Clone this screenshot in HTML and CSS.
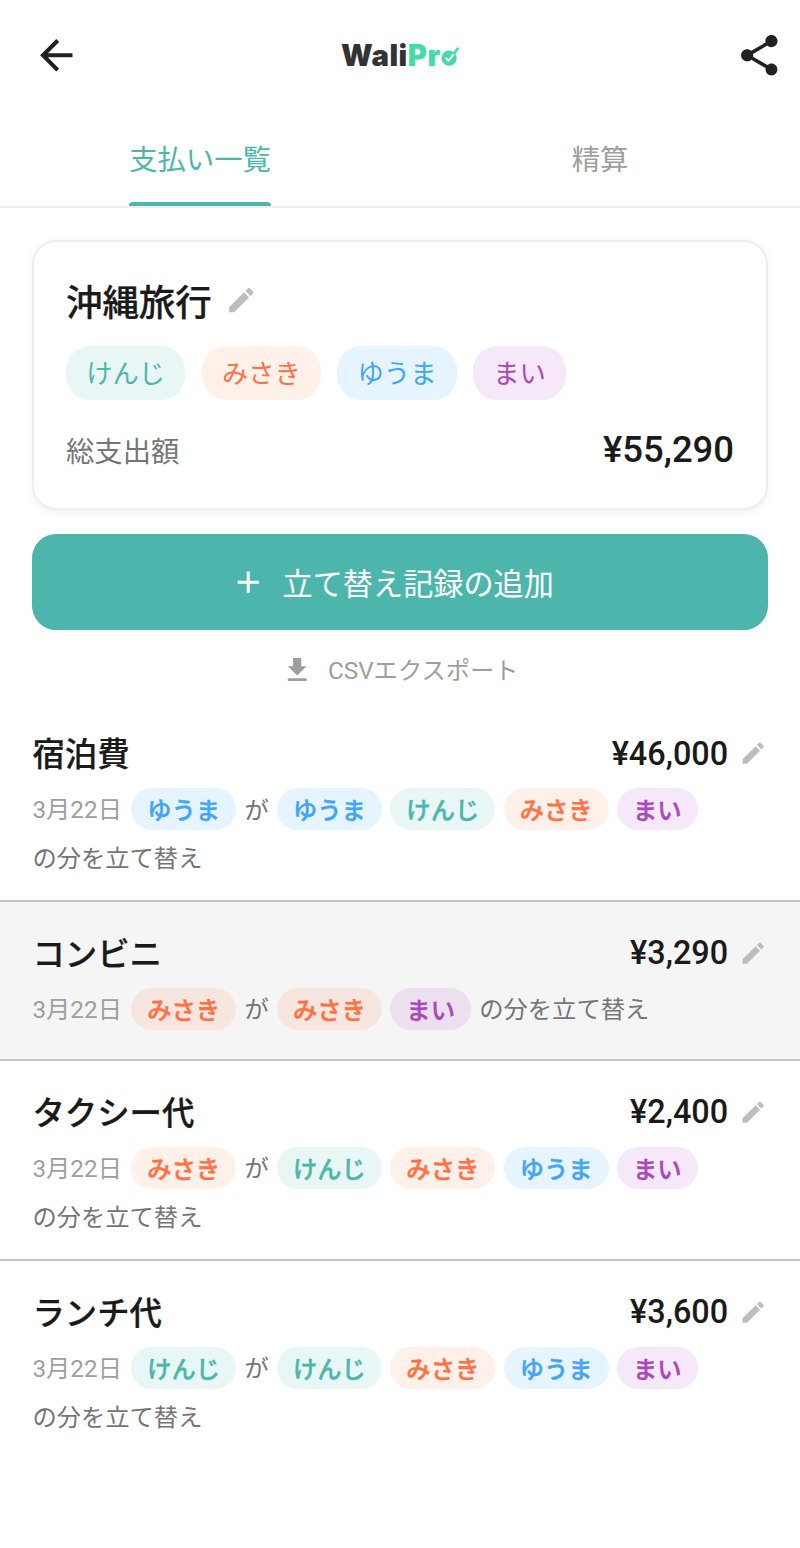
FILE: index.html
```html
<!DOCTYPE html>
<html lang="ja">
<head>
<meta charset="utf-8">
<title>WaliPro</title>
<link rel="stylesheet" href="styles.css">
</head>
<body>
<div class="app">
  <header class="topbar">
    <svg class="icon-nav" viewBox="0 0 24 24"><path d="M20 11H7.83l5.59-5.59L12 4l-8 8 8 8 1.41-1.41L7.83 13H20v-2z"/></svg>
    <div class="logo"><span class="logo-dark">Wali</span><span class="logo-green">Pr</span><svg class="logo-o" viewBox="0 0 18 22"><circle cx="8" cy="14" r="7.5" fill="#44dba9"/><path d="M4.4 13.6l3 3L13 9.5" fill="none" stroke="#fff" stroke-width="2"/><path d="M12.5 10.2L17 3.6" fill="none" stroke="#44dba9" stroke-width="2.6"/></svg></div>
    <svg class="icon-nav icon-share" viewBox="0 0 24 24"><path d="M18 16.08c-.76 0-1.44.3-1.96.77L8.91 12.7c.05-.23.09-.46.09-.7s-.04-.47-.09-.7l7.05-4.11c.54.5 1.25.81 2.04.81 1.66 0 3-1.34 3-3s-1.34-3-3-3-3 1.34-3 3c0 .24.04.47.09.7L8.04 9.81C7.5 9.31 6.79 9 6 9c-1.66 0-3 1.34-3 3s1.34 3 3 3c.79 0 1.5-.31 2.04-.81l7.12 4.16c-.05.21-.08.43-.08.65 0 1.61 1.31 2.92 2.92 2.92s2.92-1.31 2.92-2.92-1.31-2.92-2.92-2.92z"/></svg>
  </header>

  <nav class="tabs">
    <div class="tab tab-active"><span class="tab-label">支払い一覧</span></div>
    <div class="tab"><span class="tab-label">精算</span></div>
  </nav>

  <main class="content">
    <section class="card">
      <div class="card-title">
        <h1>沖縄旅行</h1>
        <svg class="icon-edit-lg" viewBox="0 0 24 24"><path d="M3 17.25V21h3.75L17.81 9.94l-3.75-3.75L3 17.25zM20.71 7.04c.39-.39.39-1.02 0-1.41l-2.34-2.34c-.39-.39-1.02-.39-1.41 0l-1.83 1.83 3.75 3.75 1.83-1.83z"/></svg>
      </div>
      <div class="members">
        <span class="chip-lg c-teal">けんじ</span>
        <span class="chip-lg c-orange">みさき</span>
        <span class="chip-lg c-blue">ゆうま</span>
        <span class="chip-lg c-purple">まい</span>
      </div>
      <div class="total">
        <span class="total-label">総支出額</span>
        <span class="total-value">¥55,290</span>
      </div>
    </section>

    <button class="add-btn" type="button">
      <svg class="icon-add" viewBox="0 0 24 24"><path d="M19 13h-6v6h-2v-6H5v-2h6V5h2v6h6v2z"/></svg>
      <span>立て替え記録の追加</span>
    </button>

    <div class="export">
      <svg class="icon-dl" viewBox="0 0 24 24"><path d="M19 9h-4V3H9v6H5l7 7 7-7zM5 18v2h14v-2H5z"/></svg>
      <span>CSVエクスポート</span>
    </div>
  </main>

  <ul class="list">
    <li class="row">
      <div class="row-head"><span class="row-title">宿泊費</span><span class="row-amount">¥46,000<svg class="icon-edit" viewBox="0 0 24 24"><path d="M3 17.25V21h3.75L17.81 9.94l-3.75-3.75L3 17.25zM20.71 7.04c.39-.39.39-1.02 0-1.41l-2.34-2.34c-.39-.39-1.02-.39-1.41 0l-1.83 1.83 3.75 3.75 1.83-1.83z"/></svg></span></div>
      <div class="row-meta"><span class="date">3月22日</span><span class="chip c-blue">ゆうま</span><span class="note">が</span><span class="chip c-blue">ゆうま</span><span class="chip c-teal">けんじ</span><span class="chip c-orange">みさき</span><span class="chip c-purple">まい</span><span class="note">の分を立て替え</span></div>
    </li>
    <li class="row row-selected">
      <div class="row-head"><span class="row-title">コンビニ</span><span class="row-amount">¥3,290<svg class="icon-edit" viewBox="0 0 24 24"><path d="M3 17.25V21h3.75L17.81 9.94l-3.75-3.75L3 17.25zM20.71 7.04c.39-.39.39-1.02 0-1.41l-2.34-2.34c-.39-.39-1.02-.39-1.41 0l-1.83 1.83 3.75 3.75 1.83-1.83z"/></svg></span></div>
      <div class="row-meta"><span class="date">3月22日</span><span class="chip c-orange">みさき</span><span class="note">が</span><span class="chip c-orange">みさき</span><span class="chip c-purple">まい</span><span class="note">の分を立て替え</span></div>
    </li>
    <li class="row">
      <div class="row-head"><span class="row-title">タクシー代</span><span class="row-amount">¥2,400<svg class="icon-edit" viewBox="0 0 24 24"><path d="M3 17.25V21h3.75L17.81 9.94l-3.75-3.75L3 17.25zM20.71 7.04c.39-.39.39-1.02 0-1.41l-2.34-2.34c-.39-.39-1.02-.39-1.41 0l-1.83 1.83 3.75 3.75 1.83-1.83z"/></svg></span></div>
      <div class="row-meta"><span class="date">3月22日</span><span class="chip c-orange">みさき</span><span class="note">が</span><span class="chip c-teal">けんじ</span><span class="chip c-orange">みさき</span><span class="chip c-blue">ゆうま</span><span class="chip c-purple">まい</span><span class="note">の分を立て替え</span></div>
    </li>
    <li class="row row-last">
      <div class="row-head"><span class="row-title">ランチ代</span><span class="row-amount">¥3,600<svg class="icon-edit" viewBox="0 0 24 24"><path d="M3 17.25V21h3.75L17.81 9.94l-3.75-3.75L3 17.25zM20.71 7.04c.39-.39.39-1.02 0-1.41l-2.34-2.34c-.39-.39-1.02-.39-1.41 0l-1.83 1.83 3.75 3.75 1.83-1.83z"/></svg></span></div>
      <div class="row-meta"><span class="date">3月22日</span><span class="chip c-teal">けんじ</span><span class="note">が</span><span class="chip c-teal">けんじ</span><span class="chip c-orange">みさき</span><span class="chip c-blue">ゆうま</span><span class="chip c-purple">まい</span><span class="note">の分を立て替え</span></div>
    </li>
  </ul>
</div>
</body>
</html>
```
FILE: styles.css
```css
* { box-sizing: border-box; }
html, body { margin: 0; padding: 0; background: #fff; }
body { font-family: Roboto, "Noto Sans CJK JP", sans-serif; color: #1a1a1a; overflow: hidden; }

.app { zoom: 2.02532; width: 395px; }

.topbar { display: grid; grid-template-columns: 1fr auto 1fr; align-items: center; height: 54px; padding: 1px 16px 0; }
.icon-nav { width: 24px; height: 24px; fill: #212121; }
.icon-share { justify-self: end; margin-right: -8px; }
.logo { display: flex; align-items: flex-end; font-family: Inter, sans-serif; font-weight: 900; font-size: 14.5px; letter-spacing: .25px; line-height: 14px; }
.logo-dark { color: #333; }
.logo-green { color: #44dba9; }
.logo-o { width: 9px; height: 11px; margin-bottom: 2px; }

.tabs { display: flex; height: 48.7px; border-bottom: 1px solid #eee; }
.tab { flex: 1; display: flex; justify-content: center; color: #9e9e9e; font-size: 14px; }
.tab-label { display: flex; flex-direction: column; height: 47.7px; padding-top: 15.5px; line-height: 20px; }
.tab-active { color: #4db6ac; }
.tab-active .tab-label::after { content: ""; display: block; height: 2px; margin-top: auto; background: #4db6ac; border-radius: 2px 2px 0 0; }

.content { padding: 16px 16px 0; }
.card { background: #fff; border: 1px solid #eee; border-radius: 12px; padding: 17.5px 15.6px 0; height: 133px; box-shadow: 0 1px 4px rgba(0,0,0,.06); }
.card-title { display: flex; align-items: center; gap: 6.5px; height: 26px; }
.card-title h1 { margin: 0; font-size: 18px; font-weight: 500; line-height: 26px; -webkit-text-stroke: .12px #1a1a1a; }
.icon-edit-lg { width: 16px; height: 16px; fill: #bdbdbd; margin-bottom: 3.5px; }
.members { display: flex; gap: 8px; margin-top: 7.5px; }
.chip-lg { font-size: 13px; line-height: 18.7px; padding: 5px 10px 3px; border-radius: 12px; }
.total { display: flex; justify-content: space-between; align-items: center; margin-top: 14px; }
.total-label { font-size: 14px; color: #757575; }
.total-value { font-size: 18px; font-weight: 500; }

.c-teal { background: #e8f6f5; color: #4db6ac; }
.c-orange { background: #fff0ea; color: #ff7043; }
.c-blue { background: #e6f4ff; color: #42a5f5; }
.c-purple { background: #f5e8f8; color: #ab47bc; }

.add-btn { display: flex; width: 100%; height: 47.4px; align-items: center; justify-content: center; gap: 8px; margin-top: 12px; padding: 0 8px 0 0; border: 0; border-radius: 12px; background: #4db6ac; color: #fff; font: inherit; font-size: 14.9px; }
.icon-add { width: 18px; height: 18px; fill: #fff; }

.export { display: flex; align-items: center; justify-content: center; gap: 7px; margin-top: 11.5px; color: #9e9e9e; font-size: 12px; line-height: 18px; height: 18px; }
.icon-dl { width: 16px; height: 16px; fill: #9e9e9e; margin-bottom: 1px; }

.list { list-style: none; margin: 6px 0 0; padding: 0; }
.row { padding: 15px 16px 14px; border-bottom: 1px solid #bdc7c4; }
.row-last { border-bottom: 0; }
.row-selected { background: #f5f5f5; }
.row-head { display: flex; justify-content: space-between; align-items: center; height: 23px; }
.row-title { font-size: 16px; font-weight: 500; line-height: 23px; -webkit-text-stroke: .12px #1a1a1a; }
.row-amount { display: flex; align-items: center; gap: 5.5px; font-size: 16px; font-weight: 500; margin-bottom: 2px; }
.icon-edit { width: 14px; height: 14px; fill: #bdbdbd; }
.row-meta { display: flex; flex-wrap: wrap; align-items: center; gap: 6.75px 4px; margin-top: 4.5px; font-size: 12px; }
.date { color: #9e9e9e; margin: .5px .5px -.5px 0; line-height: 15px; }
.note { color: #757575; line-height: 13.5px; margin: .5px 0 -.5px; }
.chip { font-weight: 500; -webkit-text-stroke: .2px currentColor; line-height: 17px; padding: 3px 8px 1px; border-radius: 10.5px; }
.row-selected .c-orange { background: #f7e6df; }
.row-selected .c-purple { background: #ecdfee; }
```
